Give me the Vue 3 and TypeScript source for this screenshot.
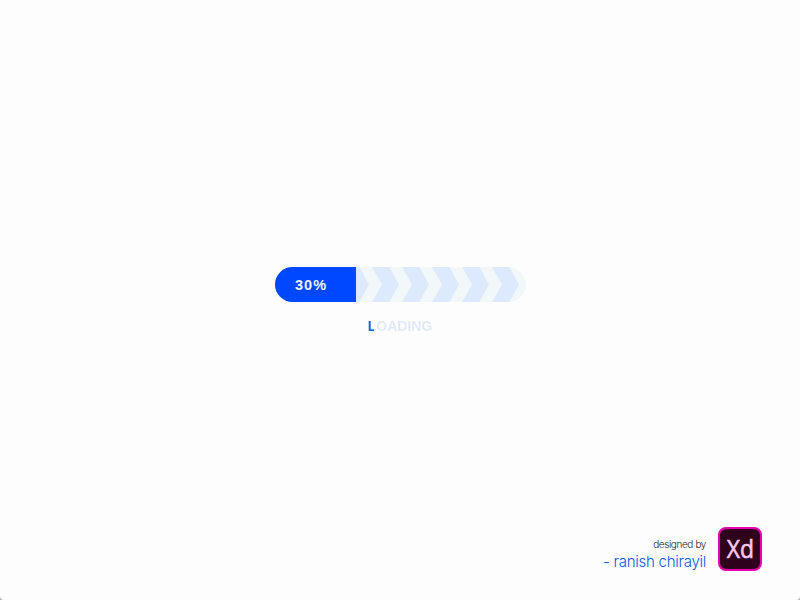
<script setup lang="ts">
import { computed, ref } from 'vue'

const progress = ref(30)
const trackWidth = 251
const fillWidth = computed(() => Math.round(20 + (trackWidth - 48) * (progress.value / 100)))
const chevrons = [77, 107, 137, 167, 197, 227].map(
  (x) => `M${x - 10} 0H${x + 7.5}L${x + 17} 17.5L${x + 7.5} 35H${x - 10}L${x} 17.5Z`,
)
</script>

<template>
  <main class="stage">
    <section class="loader">
      <div class="track">
        <svg class="arrows" width="251" height="35" viewBox="0 0 251 35" aria-hidden="true">
          <path v-for="d in chevrons" :key="d" :d="d" />
        </svg>
        <div class="fill" :style="{ width: `${fillWidth}px` }">{{ progress }}%</div>
      </div>
      <div class="label">LOADING</div>
    </section>
    <footer class="credit">
      <div class="author">
        <span class="by">designed by</span>
        <span class="name">- ranish chirayil</span>
      </div>
      <div class="logo"><span>Xd</span></div>
    </footer>
    <i class="corner left"></i>
    <i class="corner right"></i>
  </main>
</template>

<style>
body {
  background: #fdfdfd;
}
</style>

<style scoped>
.stage {
  position: relative;
  box-sizing: border-box;
  height: 600px;
  padding: 267px 38px 27px 0;
  display: flex;
  flex-direction: column;
  justify-content: space-between;
  background: #fdfdfd;
  overflow: hidden;
  font-family: 'Liberation Sans', sans-serif;
}
.loader {
  display: flex;
  flex-direction: column;
  align-items: center;
  gap: 16px;
  margin-right: -38px;
}
.track {
  width: 251px;
  height: 35px;
  display: grid;
  border-radius: 18px;
  overflow: hidden;
  background: #f2f8fa;
}
.arrows,
.fill {
  grid-area: 1 / 1;
}
.arrows path {
  fill: #dde9fd;
}
.fill {
  box-sizing: border-box;
  padding-left: 20.4px;
  line-height: 37px;
  font-size: 14.5px;
  font-weight: 700;
  letter-spacing: 1.1px;
  color: #edf4fc;
  background: #0048ff;
  z-index: 1;
}
.label {
  font-size: 14px;
  line-height: 16px;
  font-weight: 700;
  color: transparent;
  background: linear-gradient(90deg, #1468e0 6px, #dfe9fd 6px);
  background-clip: text;
}
.credit {
  display: flex;
  justify-content: flex-end;
  align-items: center;
  gap: 12px;
}
.author {
  display: flex;
  flex-direction: column;
  align-items: flex-end;
  padding-top: 12px;
  font-family: Inter, sans-serif;
  font-weight: 300;
}
.by {
  font-size: 10px;
  line-height: 14px;
  letter-spacing: -0.4px;
  color: #222;
}
.name {
  font-size: 15px;
  line-height: 22px;
  letter-spacing: -0.25px;
  color: #0a56e0;
}
.logo {
  box-sizing: border-box;
  width: 44px;
  height: 44px;
  border: 2px solid #e800b0;
  border-radius: 8px;
  background: #2e001b;
  box-shadow: inset 0 0 1px #8a0066;
  display: flex;
  align-items: center;
  justify-content: center;
  font-family: 'Open Sans', sans-serif;
  font-size: 26px;
  line-height: 36px;
  color: #ffc8f1;
  -webkit-text-stroke: 0.6px #ffc8f1;
}
.logo span {
  transform: translateY(-1px) scaleX(0.88);
}
.corner {
  position: absolute;
  bottom: 0;
  width: 4px;
  height: 4px;
}
.left {
  left: 0;
  background: radial-gradient(circle at 100% 0, #fdfdfd 3.5px, #b5b5b5 4.5px);
}
.right {
  right: 0;
  background: radial-gradient(circle at 0 0, #fdfdfd 3.5px, #b5b5b5 4.5px);
}
</style>
